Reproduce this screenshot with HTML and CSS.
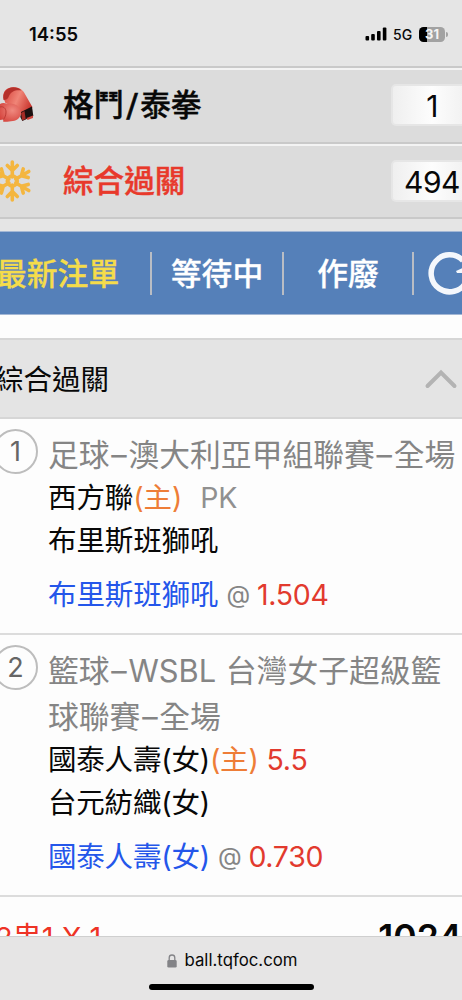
FILE: index.html
```html
<!DOCTYPE html>
<html lang="zh-Hant">
<head>
    <meta charset="UTF-8">
    <meta name="viewport" content="width=device-width, initial-scale=1.0">
    <title>最新注單</title>
    <link rel="stylesheet" href="styles.css">
</head>
<body>

<header class="status">
    <span class="time">14:55</span>
    <svg class="signal" width="22" height="14" viewBox="0 0 22 14">
        <rect x="0.5" y="9" width="3.6" height="4.5" rx="1"/>
        <rect x="6.2" y="7" width="3.6" height="6.5" rx="1"/>
        <rect x="12" y="4" width="3.6" height="9.5" rx="1"/>
        <rect x="17.8" y="0.5" width="3.6" height="13" rx="1"/>
    </svg>
    <span class="net">5G</span>
    <span class="battery">31</span>
    <span class="cap"></span>
</header>

<ul class="menu">
    <li class="menuItem">
        <svg class="menuIcon" width="40" height="44" viewBox="0 0 40 44">
            <defs>
                <linearGradient id="glove" x1="0" y1="0.2" x2="1" y2="0.6">
                    <stop offset="0" stop-color="#d8453d"/>
                    <stop offset="0.5" stop-color="#f08577"/>
                    <stop offset="1" stop-color="#c9332c"/>
                </linearGradient>
                <radialGradient id="glove2" cx="0.6" cy="0.4" r="0.7">
                    <stop offset="0" stop-color="#f08a80"/>
                    <stop offset="1" stop-color="#d5453e"/>
                </radialGradient>
            </defs>
            <path d="M3.500 15C2 8 8 4 13.500 4.300c5 0 9 2 11 6l8 14-10 7-8-8-9-3z" fill="url(#glove)"/>
            <path d="M3.500 17C2 9 8 4 13.500 4.300c3.500 0 6 1.200 8 3.200C16 6.500 11 8 9 13c-1 3-3 4-5.500 4z" fill="#b5302b"/>
            <path d="M21 29l11-5.500L33.300 33l-11 5-2-4z" fill="#1c1010"/>
            <path d="M21 30l3.500-2 1.200 8-3.500 1.500z" fill="#a52b26"/>
            <path d="M26.500 35l6.500-2.500v2.500l-5.500 2z" fill="#d0473e"/>
            <path d="M0 21c2-1.500 5-1.500 7 0 7-2 13.500 2.500 14 8.500 0 5-4 8-8 8.500-4 .5-7 1-10 .500l.500-2-4 .500z" fill="url(#glove2)"/>
            <path d="M0 24c3-1 6 1 6 5 0 3-1 5.500-2.500 7.500" fill="none" stroke="#bd3b35" stroke-width="1"/>
        </svg>
        <span class="menuName">格鬥<span class="slash">/</span>泰拳</span>
        <span class="count">1</span>
    </li>
    <li class="menuItem active">
        <svg class="menuIcon" width="40" height="44" viewBox="0 0 40 44">
            <defs>
                <g id="arm">
                    <path d="M12.3 18V3M7.300 6.500l5 5 5-5"/>
                </g>
            </defs>
            <g fill="none" stroke="#f4b63f" stroke-width="3.600" stroke-linecap="round" stroke-linejoin="round">
                <use href="#arm"/>
                <use href="#arm" transform="rotate(60 12.3 22)"/>
                <use href="#arm" transform="rotate(120 12.3 22)"/>
                <use href="#arm" transform="rotate(180 12.3 22)"/>
                <use href="#arm" transform="rotate(240 12.3 22)"/>
                <use href="#arm" transform="rotate(300 12.3 22)"/>
                <circle cx="12.3" cy="22" r="5"/>
            </g>
        </svg>
        <span class="menuName">綜合過關</span>
        <span class="count">494</span>
    </li>
</ul>

<nav class="tabs">
    <a class="tab current">最新注單</a>
    <a class="tab waiting">等待中</a>
    <a class="tab void">作廢</a>
    <a class="tab refresh">
        <svg width="48" height="48" viewBox="0 0 48 48">
            <path d="M37 11.500A18.500 18.500 0 1 0 40 33" fill="none" stroke="#f4f7fc" stroke-width="5.500"/>
            <path d="M30 22l13-6v8h-12z" fill="#f4f7fc"/>
        </svg>
    </a>
</nav>

<main>
    <div class="groupTitle">
        <span class="groupName">綜合過關</span>
        <svg width="34" height="22" viewBox="0 0 34 22">
            <path d="M3.500 18L17 4.500 30.500 18" fill="none" stroke="#b3b3b3" stroke-width="4" stroke-linecap="round"/>
        </svg>
    </div>

    <section class="bet">
        <span class="no">1</span>
        <div class="info">
            <h2 class="league">足球<i class="dash">–</i>澳大利亞甲組聯賽<i class="dash">–</i>全場</h2>
            <p class="team">西方聯<span class="home">(主)</span><span class="handicap">PK</span></p>
            <p class="team">布里斯班獅吼</p>
            <p class="pick">布里斯班獅吼<span class="at">@</span><b class="odds">1.504</b></p>
        </div>
    </section>

    <section class="bet second">
        <span class="no">2</span>
        <div class="info">
            <h2 class="league">籃球<i class="dash">–</i>WSBL <span class="rest">台灣女子超級籃</span><br>球聯賽<i class="dash">–</i>全場</h2>
            <p class="team">國泰人壽(女)<span class="home">(主)</span><b class="point">5.5</b></p>
            <p class="team">台元紡織(女)</p>
            <p class="pick">國泰人壽(女)<span class="at">@</span><b class="odds">0.730</b></p>
        </div>
    </section>

    <div class="total">
        <span class="combo">2串1 X 1</span>
        <span class="amount">1024</span>
    </div>
</main>

<footer class="browserBar">
    <div class="address">
        <svg width="10" height="14" viewBox="0 0 10 14">
            <rect x="0.300" y="6" width="9.400" height="7.600" rx="1.400" fill="#838387"/>
            <path d="M2.200 6.500V3.800a2.800 2.800 0 0 1 5.600 0v2.700" fill="none" stroke="#838387" stroke-width="1.300"/>
        </svg>
        <span>ball.tqfoc.com</span>
    </div>
    <div class="homeLine"></div>
</footer>

</body>
</html>
```
FILE: styles.css
```css
* {
    box-sizing: border-box;
}
body {
    margin: 0;
    height: 1000px;
    overflow: hidden;
    display: flex;
    flex-direction: column;
    font-family: Inter, "Noto Sans CJK TC", sans-serif;
    background-color: #fdfdfd;
    color: #080808;
}
h2, p, ul {
    margin: 0;
    padding: 0;
    font-weight: 400;
}
b {
    font-weight: 400;
}

/* phone status bar */
.status {
    flex: none;
    height: 66px;
    display: flex;
    align-items: center;
    padding: 2px 14px 0 29px;
    background-color: #e5e5e5;
}
.time {
    flex: 1;
    font-size: 18.4px;
    font-weight: 600;
}
.signal {
    margin-right: 6px;
}
.net {
    width: 20px;
    margin-right: 6px;
    font-size: 14px;
    font-weight: 500;
}
.battery {
    width: 26px;
    height: 15px;
    border-radius: 4.5px;
    background: linear-gradient(90deg, #000 31%, #a2a2a2 31%);
    color: #f4f4f4;
    font-size: 13px;
    font-weight: 700;
    line-height: 15px;
    text-align: center;
}
.cap {
    width: 2px;
    height: 5px;
    margin-left: 1px;
    border-radius: 0 2px 2px 0;
    background-color: #a2a2a2;
}

/* sports list */
.menu {
    flex: none;
    height: 165px;
    list-style: none;
    background-color: #e5e5e5;
}
.menuItem {
    display: flex;
    align-items: center;
    height: 76px;
    border-top: 2px solid #c9c9c9;
    box-shadow: inset 0 2px #f3f3f3;
    background-color: #dcdcdc;
}
.menuItem.active {
    height: 77px;
    border-bottom: 2px solid #c9c9c9;
}
.menuIcon {
    flex: none;
    margin-right: 23px;
}
.menuName {
    flex: 1;
    padding-bottom: 4px;
    font-size: 30.6px;
    font-weight: 500;
    -webkit-text-stroke: 0.4px;
}
.slash {
    display: inline-block;
    width: 16px;
    text-align: center;
    font-weight: 400;
    transform: scaleX(1.2);
}
.active .menuName {
    color: #e8392b;
}
.count {
    flex: none;
    width: 82px;
    height: 42px;
    margin-right: -11px;
    border: 2px solid #e6e6e6;
    border-radius: 5px;
    background: linear-gradient(90deg, #efefef, #fdfdfd 50%, #efefef);
    font-size: 30px;
    line-height: 40px;
    letter-spacing: -0.5px;
    text-align: center;
}

/* tabs */
.tabs {
    flex: none;
    height: 84px;
    display: flex;
    align-items: center;
    border-top: 1px solid #a3b7d5;
    border-bottom: 1px solid #a3b7d5;
    background-color: #5580b9;
    color: #fff;
}
.tab {
    flex: none;
    height: 43px;
    display: flex;
    align-items: center;
    justify-content: center;
    padding-bottom: 3px;
    border-right: 2px solid #b9bdc4;
    font-size: 30.8px;
    font-weight: 500;
    -webkit-text-stroke: 0.3px;
}
.current {
    width: 152px;
    justify-content: flex-start;
    text-indent: -4px;
    color: #f5dc4b;
}
.waiting {
    width: 132px;
}
.void {
    width: 130px;
}
.refresh {
    border: none;
    padding: 0 0 0 12px;
}

/* bet slip */
main {
    flex: 1;
    min-height: 0;
    overflow: hidden;
    padding-top: 23px;
}
.groupTitle {
    display: flex;
    align-items: center;
    justify-content: space-between;
    height: 81px;
    padding-right: 4px;
    border-top: 2px solid #d6d6d6;
    border-bottom: 2px solid #d6d6d6;
    background-color: #e4e4e4;
    font-size: 28.5px;
    text-indent: -5px;
}
.groupName {
    padding-bottom: 3px;
}
.bet {
    display: flex;
    align-items: flex-start;
    height: 216px;
    padding-top: 13px;
    border-bottom: 2px solid #dcdcdc;
}
.second {
    height: 262px;
}
.no {
    flex: none;
    width: 45px;
    height: 45px;
    margin: -3px 10px 0 -7px;
    border: 2px solid #bdbdbd;
    border-radius: 50%;
    color: #666;
    font-size: 27px;
    line-height: 42px;
    text-align: center;
}
.info {
    white-space: nowrap;
}
.league {
    margin-bottom: -2px;
    font-size: 30.8px;
    line-height: 46px;
    color: #858585;
}
.rest {
    margin-left: 1px;
}
.dash {
    display: inline-block;
    width: 18.9px;
    font-style: normal;
    text-align: center;
}
.team, .pick {
    font-size: 28.5px;
    line-height: 43px;
    letter-spacing: -0.1px;
}
.home {
    color: #ee7d37;
}
.handicap {
    margin-left: 18px;
    color: #909090;
}
.point {
    margin-left: 8px;
    color: #e23a2e;
}
.pick {
    margin-top: 11px;
    color: #2456ea;
}
.at {
    display: inline-block;
    margin: 0 7px 0 8px;
    font-size: 24.5px;
    line-height: 30px;
    vertical-align: 2px;
    color: #858585;
}
.second .team, .second .pick {
    letter-spacing: -0.2px;
}
.team .point, .pick .odds {
    letter-spacing: -0.3px;
}
.odds {
    color: #e23a2e;
}
.total {
    display: flex;
    justify-content: space-between;
    padding-top: 20px;
    font-size: 29px;
    line-height: 42px;
}
.combo {
    margin-left: -5px;
    color: #ee3325;
}
.amount {
    font-size: 35.5px;
    font-weight: 600;
}

/* browser address bar */
.browserBar {
    flex: none;
    height: 64px;
    display: flex;
    flex-direction: column;
    align-items: center;
    border-top: 1px solid #cfcfcf;
    background-color: #e6e5e5;
}
.address {
    display: flex;
    align-items: center;
    gap: 8px;
    height: 47px;
    padding-left: 2px;
    font-size: 16.8px;
}
.address span {
    padding-bottom: 2px;
}
.homeLine {
    width: 165px;
    height: 6px;
    border-radius: 3px;
    background-color: #000;
}
```
